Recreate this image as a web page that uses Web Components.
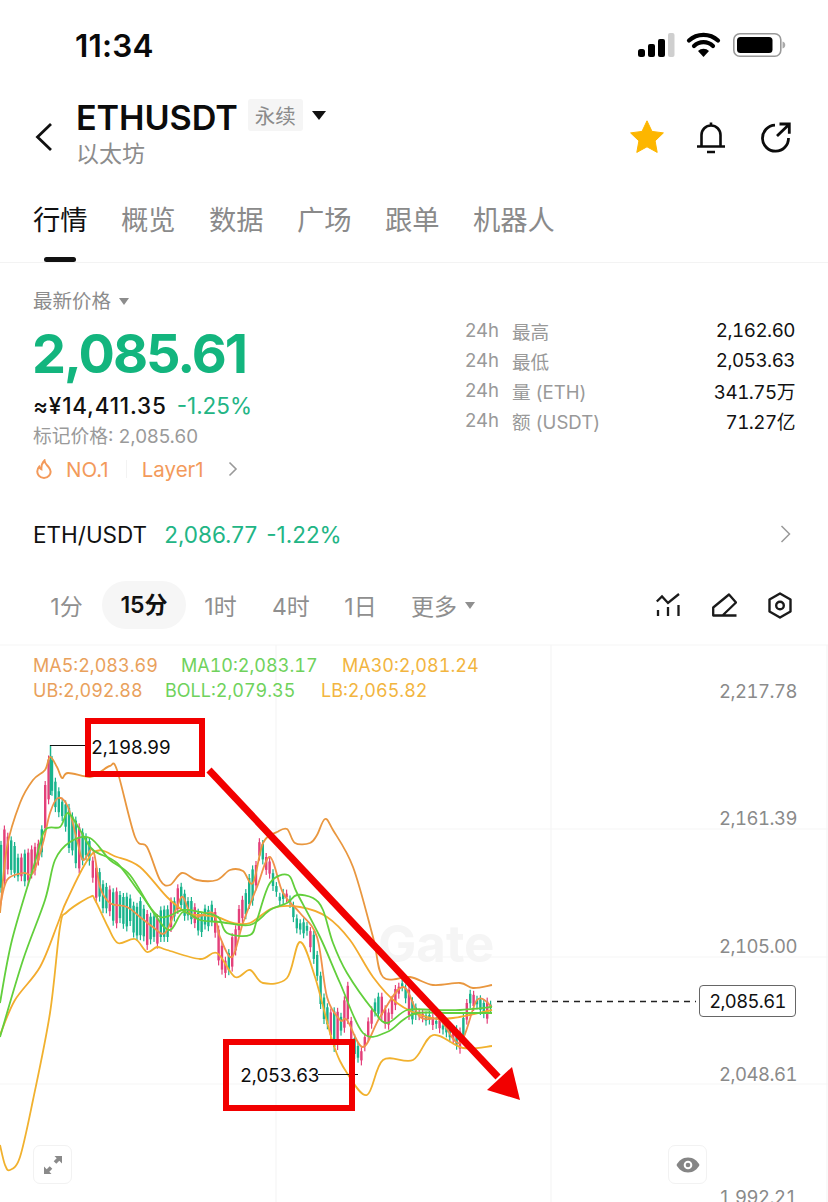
<!DOCTYPE html>
<html lang="zh">
<head>
<meta charset="utf-8">
<title>ETHUSDT</title>
<style>
  html, body { margin: 0; padding: 0; background: #fff; }
  body {
    width: 828px; height: 1202px; overflow: hidden;
    font-family: Inter, "Noto Sans CJK SC", sans-serif;
    color: #111;
  }
</style>
</head>
<body>
<status-bar></status-bar>
<market-header></market-header>
<tab-bar>
  <tab-item active>行情</tab-item>
  <tab-item>概览</tab-item>
  <tab-item>数据</tab-item>
  <tab-item>广场</tab-item>
  <tab-item>跟单</tab-item>
  <tab-item>机器人</tab-item>
</tab-bar>
<price-panel>
  <stat-row slot="stats" label="最高">2,162.60</stat-row>
  <stat-row slot="stats" label="最低">2,053.63</stat-row>
  <stat-row slot="stats" label="量 (ETH)">341.75万</stat-row>
  <stat-row slot="stats" label="额 (USDT)">71.27亿</stat-row>
</price-panel>
<pair-row></pair-row>
<interval-bar></interval-bar>
<kline-chart></kline-chart>

<script>
// Barra de estado del teléfono
class StatusBar extends HTMLElement {
  constructor() {
    super();
    this.attachShadow({ mode: 'open' });
  }

  connectedCallback() {
    this.shadowRoot.innerHTML = `
      <style>
        :host { display: flex; justify-content: space-between; align-items: center; height: 90px; padding: 0 42px 0 75px; box-sizing: border-box; }
        .time { font-size: 31.5px; font-weight: 600; letter-spacing: .2px; color: #0a0a0a; }
        svg { display: block; }
      </style>
      <span class="time">11:34</span>
      <svg width="148" height="26" viewBox="0 0 148 26">
        <rect x="0" y="17" width="7" height="8" rx="2.5"/>
        <rect x="10" y="12" width="7" height="13" rx="2"/>
        <rect x="20" y="7" width="7" height="18" rx="2"/>
        <rect x="30" y="1" width="6.5" height="24" rx="2" fill="#cfcfcf"/>
        <path d="M51 8.6a21 21 0 0 1 29 0M56 14a13.5 13.5 0 0 1 19 0" fill="none" stroke="#000" stroke-width="4.2" stroke-linecap="round"/>
        <path d="M60 19a7.6 7.6 0 0 1 11 0L65.500 25z"/>
        <rect x="95.8" y="1.8" width="47" height="22.4" rx="6" fill="none" stroke="#999" stroke-width="1.6"/>
        <rect x="99" y="5" width="35.5" height="16" rx="3.5"/>
        <path d="M144.5 9.5a3.6 3.6 0 0 1 0 7z" fill="#aaa"/>
      </svg>
    `;
  }
}

// Cabecera con el par, la etiqueta y las acciones
class MarketHeader extends HTMLElement {
  constructor() {
    super();
    this.attachShadow({ mode: 'open' });
  }

  connectedCallback() {
    this.shadowRoot.innerHTML = `
      <style>
        :host { display: flex; align-items: center; height: 92px; padding: 0 37px 0 35px; box-sizing: border-box; }
        .back { margin-right: 23px; flex: none; margin-top: 2px; }
        .info { flex: 1; display: flex; flex-direction: column; padding-bottom: 8px; }
        .top { display: flex; align-items: center; height: 44px; }
        .name { font-size: 34.2px; font-weight: 600; color: #0c0c0c; letter-spacing: -.1px; }
        .tag { margin-left: 10px; width: 55px; height: 32px; background: #f5f5f5; border-radius: 3px; color: #8b8b8b; font-size: 20.500px; display: flex; align-items: center; justify-content: center; margin-top: -5px; }
        .arrow { margin-left: 9px; width: 0; height: 0; border: 7px solid transparent; border-top: 9px solid #111; border-bottom: 0; margin-top: -5px; }
        .sub { font-size: 23px; line-height: 30px; color: #8c8c8c; margin-top: -1px; }
        .actions { display: flex; align-items: center; margin-top: 2px; }
        svg { display: block; }
      </style>
      <svg class="back" width="18" height="30" viewBox="0 0 18 30"><path d="M16 2 2.5 15 16 28" fill="none" stroke="#111" stroke-width="2.8"/></svg>
      <div class="info">
        <div class="top">
          <span class="name">ETHUSDT</span>
          <span class="tag">永续</span>
          <span class="arrow"></span>
        </div>
        <span class="sub">以太坊</span>
      </div>
      <div class="actions">
        <svg width="34" height="34" viewBox="0 0 34 34"><path d="M17 .8l5 10.6 11.400 1.500-8.300 8 2.100 11.500L17 26.800 6.800 32.400l2.100-11.500-8.300-8L12 11.400z" fill="#fdb600" stroke="#fdb600" stroke-linejoin="round"/></svg>
        <svg width="30" height="34" viewBox="0 0 30 34" style="margin:0 34px 0 32px"><path d="M1 26.500h28M5.500 26.500V15a9.500 9.500 0 0 1 19 0v11.500M15 5.500V2.500M11 32h8" fill="none" stroke="#0c0c0c" stroke-width="2.600"/></svg>
        <svg width="31" height="32" viewBox="0 0 31 32"><path d="M15 4.200A13 13 0 1 0 28.500 17M17 15 29 3.500M19.500 3h9.800v9.800" fill="none" stroke="#0c0c0c" stroke-width="2.800"/></svg>
      </div>
    `;
  }
}

// Pestañas principales
class TabBar extends HTMLElement {
  constructor() {
    super();
    this.attachShadow({ mode: 'open' });
  }

  connectedCallback() {
    this.shadowRoot.innerHTML = `
      <style>
        :host { display: flex; gap: 33.400px; height: 81px; padding: 0 33px; box-sizing: border-box; border-bottom: 1px solid #f3f3f3; }
      </style>
      <slot></slot>
    `;
  }
}

class TabItem extends HTMLElement {
  constructor() {
    super();
    this.attachShadow({ mode: 'open' });
  }

  connectedCallback() {
    this.shadowRoot.innerHTML = `
      <style>
        :host { display: block; position: relative; font-size: 27.300px; line-height: 40px; padding-top: 19px; color: #8a8a8a; }
        :host([active]) { color: #111; }
        :host([active])::after { content: ""; position: absolute; left: 11px; bottom: 0; width: 32px; height: 5px; border-radius: 3px; background: #111; }
      </style>
      <slot></slot>
    `;
  }
}

// Fila de estadística de 24h
class StatRow extends HTMLElement {
  constructor() {
    super();
    this.attachShadow({ mode: 'open' });
  }

  connectedCallback() {
    this.shadowRoot.innerHTML = `
      <style>
        :host { display: flex; align-items: center; height: 30px; font-size: 18.600px; white-space: nowrap; }
        .h { color: #999; width: 47px; }
        .label { color: #999; flex: 1; }
        .value { color: #111; font-size: 18.800px; letter-spacing: -.5px; font-variant-numeric: tabular-nums; }
      </style>
      <span class="h">24h</span>
      <span class="label">${this.getAttribute('label')}</span>
      <span class="value"><slot></slot></span>
    `;
  }
}

// Panel con el precio actual y los datos de 24h
class PricePanel extends HTMLElement {
  constructor() {
    super();
    this.attachShadow({ mode: 'open' });
  }

  connectedCallback() {
    this.shadowRoot.innerHTML = `
      <style>
        :host { display: flex; justify-content: space-between; height: 239px; padding: 22px 33px 0; box-sizing: border-box; }
        .left { display: flex; flex-direction: column; }
        .latest { display: flex; align-items: center; gap: 8px; font-size: 19.500px; line-height: 32px; color: #8c8c8c; }
        .tri { width: 0; height: 0; border: 5.500px solid transparent; border-top: 7px solid #8c8c8c; border-bottom: 0; }
        .price { font-size: 54px; line-height: 58px; font-weight: 700; color: #13b57e; letter-spacing: -2px; margin-top: 8px; margin-left: -1px; }
        .fiat { display: flex; gap: 10px; font-size: 22.500px; line-height: 30px; margin-top: 8px; font-weight: 500; }
        .fiat span:first-child { letter-spacing: .8px; }
        .pct { color: #22b585; font-weight: 400; }
        .mark { font-size: 18.800px; line-height: 30px; color: #9a9a9a; margin-top: 1px; }
        .tags { display: flex; align-items: center; height: 34px; color: #f39a5b; font-size: 20.500px; }
        .sep { width: 1px; height: 18px; background: #f3f3f3; margin: 0 15px 0 17px; }
        .stats { width: 330px; margin-top: 30px; }
        svg { display: block; }
      </style>
      <div class="left">
        <div class="latest">最新价格<span class="tri"></span></div>
        <div class="price">2,085.61</div>
        <div class="fiat"><span>≈¥14,411.35</span><span class="pct">-1.25%</span></div>
        <div class="mark">标记价格: 2,085.60</div>
        <div class="tags">
          <svg width="18" height="21" viewBox="0 0 18 21" style="margin:0 13px 0 2px"><path d="M9.500 1.500c.4 3.500 2.300 4.300 4.300 6.800 2.400 3.100 2 6.300.3 8.400-2.600 3.100-7.600 3.100-10.300 0-2.200-2.500-2-6.400.4-9 .4 1.300 1 2.100 2.200 2.600C6.200 7.600 7 4.100 9.500 1.500z" fill="none" stroke="#f39a5b" stroke-width="2"/></svg>
          <span>NO.1</span><span class="sep"></span><span>Layer1</span>
          <svg width="10" height="16" viewBox="0 0 10 16" style="margin-left:24px"><path d="M1.500 1.500 8 8l-6.500 6.500" fill="none" stroke="#999" stroke-width="1.600"/></svg>
        </div>
      </div>
      <div class="stats"><slot name="stats"></slot></div>
    `;
  }
}

// Fila del mercado al contado
class PairRow extends HTMLElement {
  constructor() {
    super();
    this.attachShadow({ mode: 'open' });
  }

  connectedCallback() {
    this.shadowRoot.innerHTML = `
      <style>
        :host { display: flex; align-items: center; height: 64px; padding: 0 37px 0 33px; box-sizing: border-box; font-size: 22.500px; }
        .name { margin-right: 17px; color: #111; }
        .num { color: #22b585; margin-right: 9px; }
        svg { margin-left: auto; display: block; }
      </style>
      <span class="name">ETH/USDT</span>
      <span class="num">2,086.77</span>
      <span class="num">-1.22%</span>
      <svg width="11" height="18" viewBox="0 0 11 18"><path d="M1.500 1 9.500 9l-8 8" fill="none" stroke="#999" stroke-width="1.500"/></svg>
    `;
  }
}

// Selector de intervalos y herramientas del gráfico
class IntervalBar extends HTMLElement {
  constructor() {
    super();
    this.attachShadow({ mode: 'open' });
  }

  connectedCallback() {
    this.shadowRoot.innerHTML = `
      <style>
        :host { display: flex; align-items: center; height: 48px; margin: 15px 0 11px; padding: 0 36px 0 32px; box-sizing: border-box; font-size: 23px; color: #8f8f8f; }
        .item { padding: 0 18px; white-space: nowrap; text-align: center; }
        .on { background: #f6f6f6; border-radius: 24px; color: #111; line-height: 48px; font-weight: 600; }
        .more { display: flex; align-items: center; gap: 8px; margin-left: -2px; }
        .tri { width: 0; height: 0; border: 5.500px solid transparent; border-top: 7px solid #8f8f8f; border-bottom: 0; }
        .tools { margin-left: auto; display: flex; gap: 31px; align-items: center; }
        svg { display: block; }
      </style>
      <span class="item" style="width:34px;text-indent:-1px">1分</span>
      <span class="item on" style="width:48px">15分</span>
      <span class="item" style="width:34px;text-indent:-1px">1时</span>
      <span class="item" style="width:35px;margin-left:-2px">4时</span>
      <span class="item" style="width:33px;margin-left:1px">1日</span>
      <span class="item more">更多<span class="tri"></span></span>
      <div class="tools">
        <svg width="25" height="24" viewBox="0 0 25 24"><path d="M.8 8.500 6 3.500 12 10 23 1M2 17v6M12 14v9M22.500 12v11" fill="none" stroke="#1a1a1a" stroke-width="2.300"/></svg>
        <svg width="25" height="24" viewBox="0 0 25 24"><path d="M1.200 22.500V14.500L17 1.500 24 9.500 10.500 22.500zM10.500 22.500H24.500" fill="none" stroke="#1a1a1a" stroke-width="2.300" stroke-linejoin="round"/></svg>
        <svg width="24" height="27" viewBox="0 0 24 27"><path d="M12 1.500 22.500 7.500v12L12 25.500 1.500 19.500v-12z" fill="none" stroke="#1a1a1a" stroke-width="2.400" stroke-linejoin="round"/><circle cx="12" cy="13.500" r="3.800" fill="none" stroke="#1a1a1a" stroke-width="2.400"/></svg>
      </div>
    `;
  }
}

// Curvas en coordenadas de la página (x, y)
const UB = [[0,913],[7,847],[20,803],[33,780],[45,770],[50,757],[57,767],[62,778],[68,773],[90,777],[100,772],[110,766],[117,770],[135,837],[147,847],[160,880],[170,885],[182,873],[197,880],[217,880],[230,870],[243,871],[253,883],[263,843],[277,832],[287,829],[295,843],[310,843],[317,835],[325,819],[333,830],[353,867],[373,937],[383,977],[410,977],[433,985],[460,983],[473,988],[492,985]];
const LB = [[0,1145],[5,1165],[10,1170],[20,1157],[33,1100],[50,1013],[60,927],[67,912],[90,897],[95,900],[108,927],[118,943],[135,939],[147,952],[157,947],[167,950],[200,959],[217,953],[235,977],[250,970],[263,983],[287,978],[300,942],[315,977],[333,1043],[347,1073],[367,1095],[383,1060],[413,1060],[433,1035],[463,1048],[492,1046]];
const MA30 = [[0,1035],[15,1000],[40,967],[58,923],[67,900],[93,853],[117,857],[140,867],[167,897],[187,913],[200,915],[217,917],[233,923],[250,923],[273,908],[300,907],[327,917],[350,940],[373,977],[397,1003],[427,1017],[453,1018],[492,1010]];
const MA10 = [[0,1003],[12,940],[35,862],[45,830],[60,827],[68,813],[80,830],[93,850],[117,863],[140,893],[160,917],[183,910],[200,912],[218,917],[227,933],[250,935],[257,920],[270,883],[288,875],[297,893],[320,937],[340,983],[363,1033],[387,1032],[403,1020],[417,1013],[450,1013],[467,1013],[492,1013]];
const BOLL = [[0,1037],[23,960],[45,900],[55,860],[70,842],[90,838],[110,860],[130,875],[155,915],[170,930],[183,912],[200,920],[220,922],[250,925],[270,910],[287,903],[297,895],[313,898],[323,910],[333,943],[347,973],[373,1010],[387,1023],[407,1010],[433,1010],[460,1010],[492,1007]];
const MA5 = [[0,907],[7,880],[23,873],[33,873],[43,843],[50,813],[58,798],[68,807],[77,840],[83,860],[93,850],[100,887],[110,903],[127,907],[140,917],[153,927],[165,933],[177,907],[183,897],[193,917],[213,913],[220,937],[232,957],[243,923],[257,887],[270,857],[283,893],[300,913],[317,937],[327,997],[340,1020],[347,1020],[363,1047],[380,1017],[403,987],[420,1017],[440,1020],[460,1043],[477,1000],[492,1007]];

// Envolvente de las velas: x, máximo, mínimo
const VELAS = [[0,840,910],[6,818,880],[20,850,890],[30,845,885],[40,838,870],[46,772,830],[50,745,800],[57,780,820],[62,795,825],[70,800,860],[80,825,875],[88,830,860],[95,860,905],[110,885,925],[130,890,935],[140,895,950],[150,905,950],[165,905,950],[180,880,915],[200,905,943],[213,900,925],[220,925,983],[225,955,985],[232,930,975],[243,887,925],[255,860,903],[260,833,860],[265,843,877],[270,857,883],[280,890,910],[288,887,903],[298,913,940],[307,920,940],[315,923,977],[322,983,1017],[328,997,1040],[335,1000,1060],[342,1007,1037],[348,980,1030],[353,1027,1067],[362,1043,1067],[367,1020,1047],[375,993,1020],[380,987,1020],[388,1010,1037],[395,980,1013],[403,977,993],[410,987,1027],[420,1007,1023],[437,1013,1033],[447,1020,1040],[460,1027,1057],[465,997,1037],[470,987,1013],[477,993,1013],[487,997,1027],[491,997,1013]];

function suave(pts) {
  // Catmull-Rom a bezier para que las líneas no queden quebradas
  let d = `M${pts[0][0]} ${pts[0][1]}`;
  for (let i = 0; i < pts.length - 1; i++) {
    const p0 = pts[i - 1] || pts[i], p1 = pts[i], p2 = pts[i + 1], p3 = pts[i + 2] || p2;
    const c1x = p1[0] + (p2[0] - p0[0]) / 6, c1y = p1[1] + (p2[1] - p0[1]) / 6;
    const c2x = p2[0] - (p3[0] - p1[0]) / 6, c2y = p2[1] - (p3[1] - p1[1]) / 6;
    d += `C${c1x.toFixed(1)} ${c1y.toFixed(1)} ${c2x.toFixed(1)} ${c2y.toFixed(1)} ${p2[0]} ${p2[1]}`;
  }
  return d;
}

function interpola(x) {
  for (let i = 0; i < VELAS.length - 1; i++) {
    const a = VELAS[i], b = VELAS[i + 1];
    if (x >= a[0] && x <= b[0]) {
      const t = (x - a[0]) / (b[0] - a[0]);
      return [a[1] + (b[1] - a[1]) * t, a[2] + (b[2] - a[2]) * t];
    }
  }
  return VELAS[VELAS.length - 1].slice(1);
}

function ruido(i) {
  const s = Math.sin(i * 12.9898) * 43758.5453;
  return s - Math.floor(s);
}

function velas() {
  let out = '';
  let i = 0;
  for (let x = 1; x < 492; x += 3.4) {
    const [t, b] = interpola(x);
    const [tn, bn] = interpola(x + 3.4);
    const sube = (t + b) > (tn + bn);
    const rojo = ruido(i) < 0.3 ? !sube : sube;
    const alto = b - t;
    // cada vela ocupa solo parte de la envolvente, así se ven separadas
    const top = t + ruido(i + 50) * alto * 0.22, bot = b - ruido(i + 90) * alto * 0.22;
    const col = rojo ? '#e4407a' : '#18b48c';
    out += `<rect x="${(x - .6).toFixed(1)}" y="${top.toFixed(1)}" width="1.200" height="${(bot - top).toFixed(1)}" fill="${col}"/>`;
    out += `<rect x="${(x - 1.2).toFixed(1)}" y="${(top + 4).toFixed(1)}" width="2.400" height="${Math.max(bot - top - 9, 2).toFixed(1)}" fill="${col}"/>`;
    i++;
  }
  return out;
}

// Gráfico de velas con indicadores y las anotaciones en rojo
class KlineChart extends HTMLElement {
  constructor() {
    super();
    this.attachShadow({ mode: 'open' });
  }

  connectedCallback() {
    const linea = (pts, col) => `<path d="${suave(pts)}" fill="none" stroke="${col}" stroke-width="1.800"/>`;
    const eje = [[691, '2,217.78'], [818, '2,161.39'], [946, '2,105.00'], [1074, '2,048.61'], [1197, '1,992.21']];
    this.shadowRoot.innerHTML = `
      <style>
        :host { display: block; position: relative; height: 562px; overflow: hidden; font-size: 18px; font-variant-numeric: tabular-nums; }
        svg.plot { position: absolute; left: 0; top: 0; }
        .legend { position: absolute; left: 33px; top: 13px; line-height: 25px; white-space: nowrap; }
        .legend div { display: flex; }
        .legend span { display: block; }
        .o { color: #e9a15c; } .g { color: #6fd25c; } .y { color: #f2b540; }
        .axis { position: absolute; right: 31px; color: #8a8a8a; font-size: 18.500px; letter-spacing: -.5px; transform: translateY(-50%); }
        .tag { position: absolute; left: 699px; top: 345px; width: 97px; height: 32px; box-sizing: border-box; border: 1px solid #666; border-radius: 4px; background: #fff; display: flex; align-items: center; justify-content: center; font-size: 18.400px; letter-spacing: -.6px; color: #111; }
        .note { position: absolute; font-size: 18.700px; letter-spacing: -.4px; color: #0c0c0c; transform: translateY(-50%); }
        .wm { position: absolute; left: 378px; top: 274px; font-size: 51px; font-weight: 700; line-height: 60px; color: #f5f5f5; }
        .btn { position: absolute; top: 505px; width: 39px; height: 39px; box-sizing: border-box; background: #fff; border: 1.500px solid #f2f2f2; border-radius: 7px; display: flex; align-items: center; justify-content: center; }
      </style>
      <div class="wm">Gate</div>
      <svg class="plot" width="828" height="562" viewBox="0 640 828 562">
        <g stroke="#f6f6f6" stroke-width="1.200">
          <path d="M0 645H828M0 829H828M0 957H828M0 1084H828M276 645V1202M551 645V1202M827 645V1202"/>
        </g>
        ${velas()}
        <path d="M50.500 745V795" stroke="#18b48c" stroke-width="1.500"/>
        ${linea(UB, '#e9973f')}
        ${linea(LB, '#f1b12e')}
        ${linea(MA30, '#f3ab2e')}
        ${linea(MA5, '#f0924a')}
        ${linea(MA10, '#62cf3c')}
        ${linea(BOLL, '#62cf3c')}
        <path d="M50 745.500H87M318 1074.500H358" stroke="#111" stroke-width="1.200" fill="none"/>
        <path d="M497 1001.500H696" stroke="#222" stroke-width="1.300" stroke-dasharray="6 5" fill="none"/>
        <rect x="88" y="721" width="114" height="53" fill="none" stroke="#f20000" stroke-width="6"/>
        <rect x="226" y="1042" width="126" height="66" fill="none" stroke="#f20000" stroke-width="6"/>
        <path d="M209 770 498 1077" stroke="#f20000" stroke-width="7" fill="none"/>
        <path d="M487 1090 512 1067 520 1100z" fill="#f20000"/>
      </svg>
      <div class="legend">
        <div><span class="o" style="width:148px">MA5:2,083.69</span><span class="g" style="width:161px">MA10:2,083.17</span><span class="y">MA30:2,081.24</span></div>
        <div><span class="o" style="width:132px">UB:2,092.88</span><span class="g" style="width:156px">BOLL:2,079.35</span><span class="y">LB:2,065.82</span></div>
      </div>
      ${eje.map(([y, t]) => `<span class="axis" style="top:${y - 640}px">${t}</span>`).join('')}
      <div class="tag">2,085.61</div>
      <span class="note" style="left:91px;top:107px">2,198.99</span>
      <span class="note" style="left:240px;top:435px">2,053.63</span>
      <div class="btn" style="left:33px">
        <svg width="20" height="20" viewBox="0 0 20 20" fill="#8a8a8a"><path d="M11.500 1H19v7.500l-2.700-2.700-3 3-2.600-2.600 3-3zM8.500 19H1v-7.500l2.700 2.700 3-3 2.600 2.600-3 3z"/></svg>
      </div>
      <div class="btn" style="left:668px">
        <svg width="24" height="16" viewBox="0 0 24 16"><path d="M12 .5C6.500.5 2.500 4 .5 8c2 4 6 7.500 11.500 7.500S21.500 12 23.500 8C21.500 4 17.500.5 12 .5z" fill="#858585"/><circle cx="12" cy="8" r="4.300" fill="#fff"/><circle cx="12" cy="8" r="2.300" fill="#858585"/></svg>
      </div>
    `;
  }
}

// Registro de los componentes
customElements.define('status-bar', StatusBar);
customElements.define('market-header', MarketHeader);
customElements.define('tab-bar', TabBar);
customElements.define('tab-item', TabItem);
customElements.define('stat-row', StatRow);
customElements.define('price-panel', PricePanel);
customElements.define('pair-row', PairRow);
customElements.define('interval-bar', IntervalBar);
customElements.define('kline-chart', KlineChart);
</script>
</body>
</html>
